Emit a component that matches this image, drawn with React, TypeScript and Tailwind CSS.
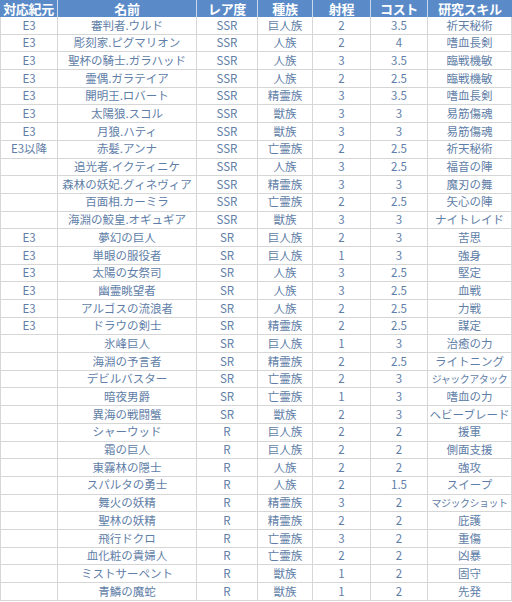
type Unit = [string, string, string, string, string, string, string]

const headers = ['対応紀元', '名前', 'レア度', '種族', '射程', 'コスト', '研究スキル']

const units: Unit[] = [
  ['E3', '審判者.ウルド', 'SSR', '巨人族', '2', '3.5', '祈天秘術'],
  ['E3', '彫刻家.ピグマリオン', 'SSR', '人族', '2', '4', '嗜血長剣'],
  ['E3', '聖杯の騎士.ガラハッド', 'SSR', '人族', '3', '3.5', '臨戦機敏'],
  ['E3', '霊偶.ガラテイア', 'SSR', '人族', '2', '2.5', '臨戦機敏'],
  ['E3', '開明王.ロバート', 'SSR', '精霊族', '3', '3.5', '嗜血長剣'],
  ['E3', '太陽狼.スコル', 'SSR', '獣族', '3', '3', '易筋傷魂'],
  ['E3', '月狼.ハティ', 'SSR', '獣族', '3', '3', '易筋傷魂'],
  ['E3以降', '赤髪.アンナ', 'SSR', '亡霊族', '2', '2.5', '祈天秘術'],
  ['', '追光者.イクティニケ', 'SSR', '人族', '3', '2.5', '福音の陣'],
  ['', '森林の妖妃.グィネヴィア', 'SSR', '精霊族', '3', '3', '魔刃の舞'],
  ['', '百面相.カーミラ', 'SSR', '亡霊族', '2', '2.5', '矢心の陣'],
  ['', '海淵の鮫皇.オギュギア', 'SSR', '獣族', '3', '3', 'ナイトレイド'],
  ['E3', '夢幻の巨人', 'SR', '巨人族', '2', '3', '苦思'],
  ['E3', '単眼の服役者', 'SR', '巨人族', '1', '3', '強身'],
  ['E3', '太陽の女祭司', 'SR', '人族', '3', '2.5', '堅定'],
  ['E3', '幽霊眺望者', 'SR', '人族', '3', '2.5', '血戦'],
  ['E3', 'アルゴスの流浪者', 'SR', '人族', '2', '2.5', '力戦'],
  ['E3', 'ドラウの剣士', 'SR', '精霊族', '2', '2.5', '謀定'],
  ['', '氷峰巨人', 'SR', '巨人族', '1', '3', '治癒の力'],
  ['', '海淵の予言者', 'SR', '精霊族', '2', '2.5', 'ライトニング'],
  ['', 'デビルバスター', 'SR', '亡霊族', '2', '3', 'ジャックアタック'],
  ['', '暗夜男爵', 'SR', '亡霊族', '1', '3', '嗜血の力'],
  ['', '異海の戦闘蟹', 'SR', '獣族', '2', '3', 'ヘビーブレード'],
  ['', 'シャーウッド', 'R', '巨人族', '2', '2', '援軍'],
  ['', '霜の巨人', 'R', '巨人族', '2', '2', '側面支援'],
  ['', '東霧林の隠士', 'R', '人族', '2', '2', '強攻'],
  ['', 'スパルタの勇士', 'R', '人族', '2', '1.5', 'スイープ'],
  ['', '舞火の妖精', 'R', '精霊族', '3', '2', 'マジックショット'],
  ['', '聖林の妖精', 'R', '精霊族', '2', '2', '庇護'],
  ['', '飛行ドクロ', 'R', '亡霊族', '3', '2', '重傷'],
  ['', '血化粧の貴婦人', 'R', '亡霊族', '2', '2', '凶暴'],
  ['', 'ミストサーペント', 'R', '獣族', '1', '2', '固守'],
  ['', '青鱗の魔蛇', 'R', '獣族', '1', '2', '先発'],
]

const cols = 'grid grid-cols-[58px_139px_61px_55px_58px_57px_84px]'

export default function App() {
  return (
    <div className="w-[512px] bg-white font-['Noto_Sans_CJK_JP','Noto_Sans',sans-serif]">
      <div className={`${cols} h-[17px] bg-[#5a8bc8]`}>
        {headers.map((h, i) => (
          <div
            key={h}
            className={`flex items-center justify-center text-[13px] font-bold leading-none tracking-tight text-white ${
              i < headers.length - 1 ? 'border-r border-[#c9d9ee]' : ''
            }`}
          >
            {h}
          </div>
        ))}
      </div>

      {units.map((u, r) => (
        <div key={r} className={`${cols} h-[17.69px]`}>
          {u.map((cell, c) => (
            <div
              key={c}
              className={`flex items-center justify-center overflow-hidden whitespace-nowrap border-b border-r border-[#d6d6d6] leading-none text-[#5f7ea7] ${
                c === 0 ? 'border-l' : ''
              } ${c === 6 && cell.length >= 8 ? 'text-[10px] tracking-[-0.05em]' : 'text-[11.5px]'}`}
            >
              {cell}
            </div>
          ))}
        </div>
      ))}
    </div>
  )
}
